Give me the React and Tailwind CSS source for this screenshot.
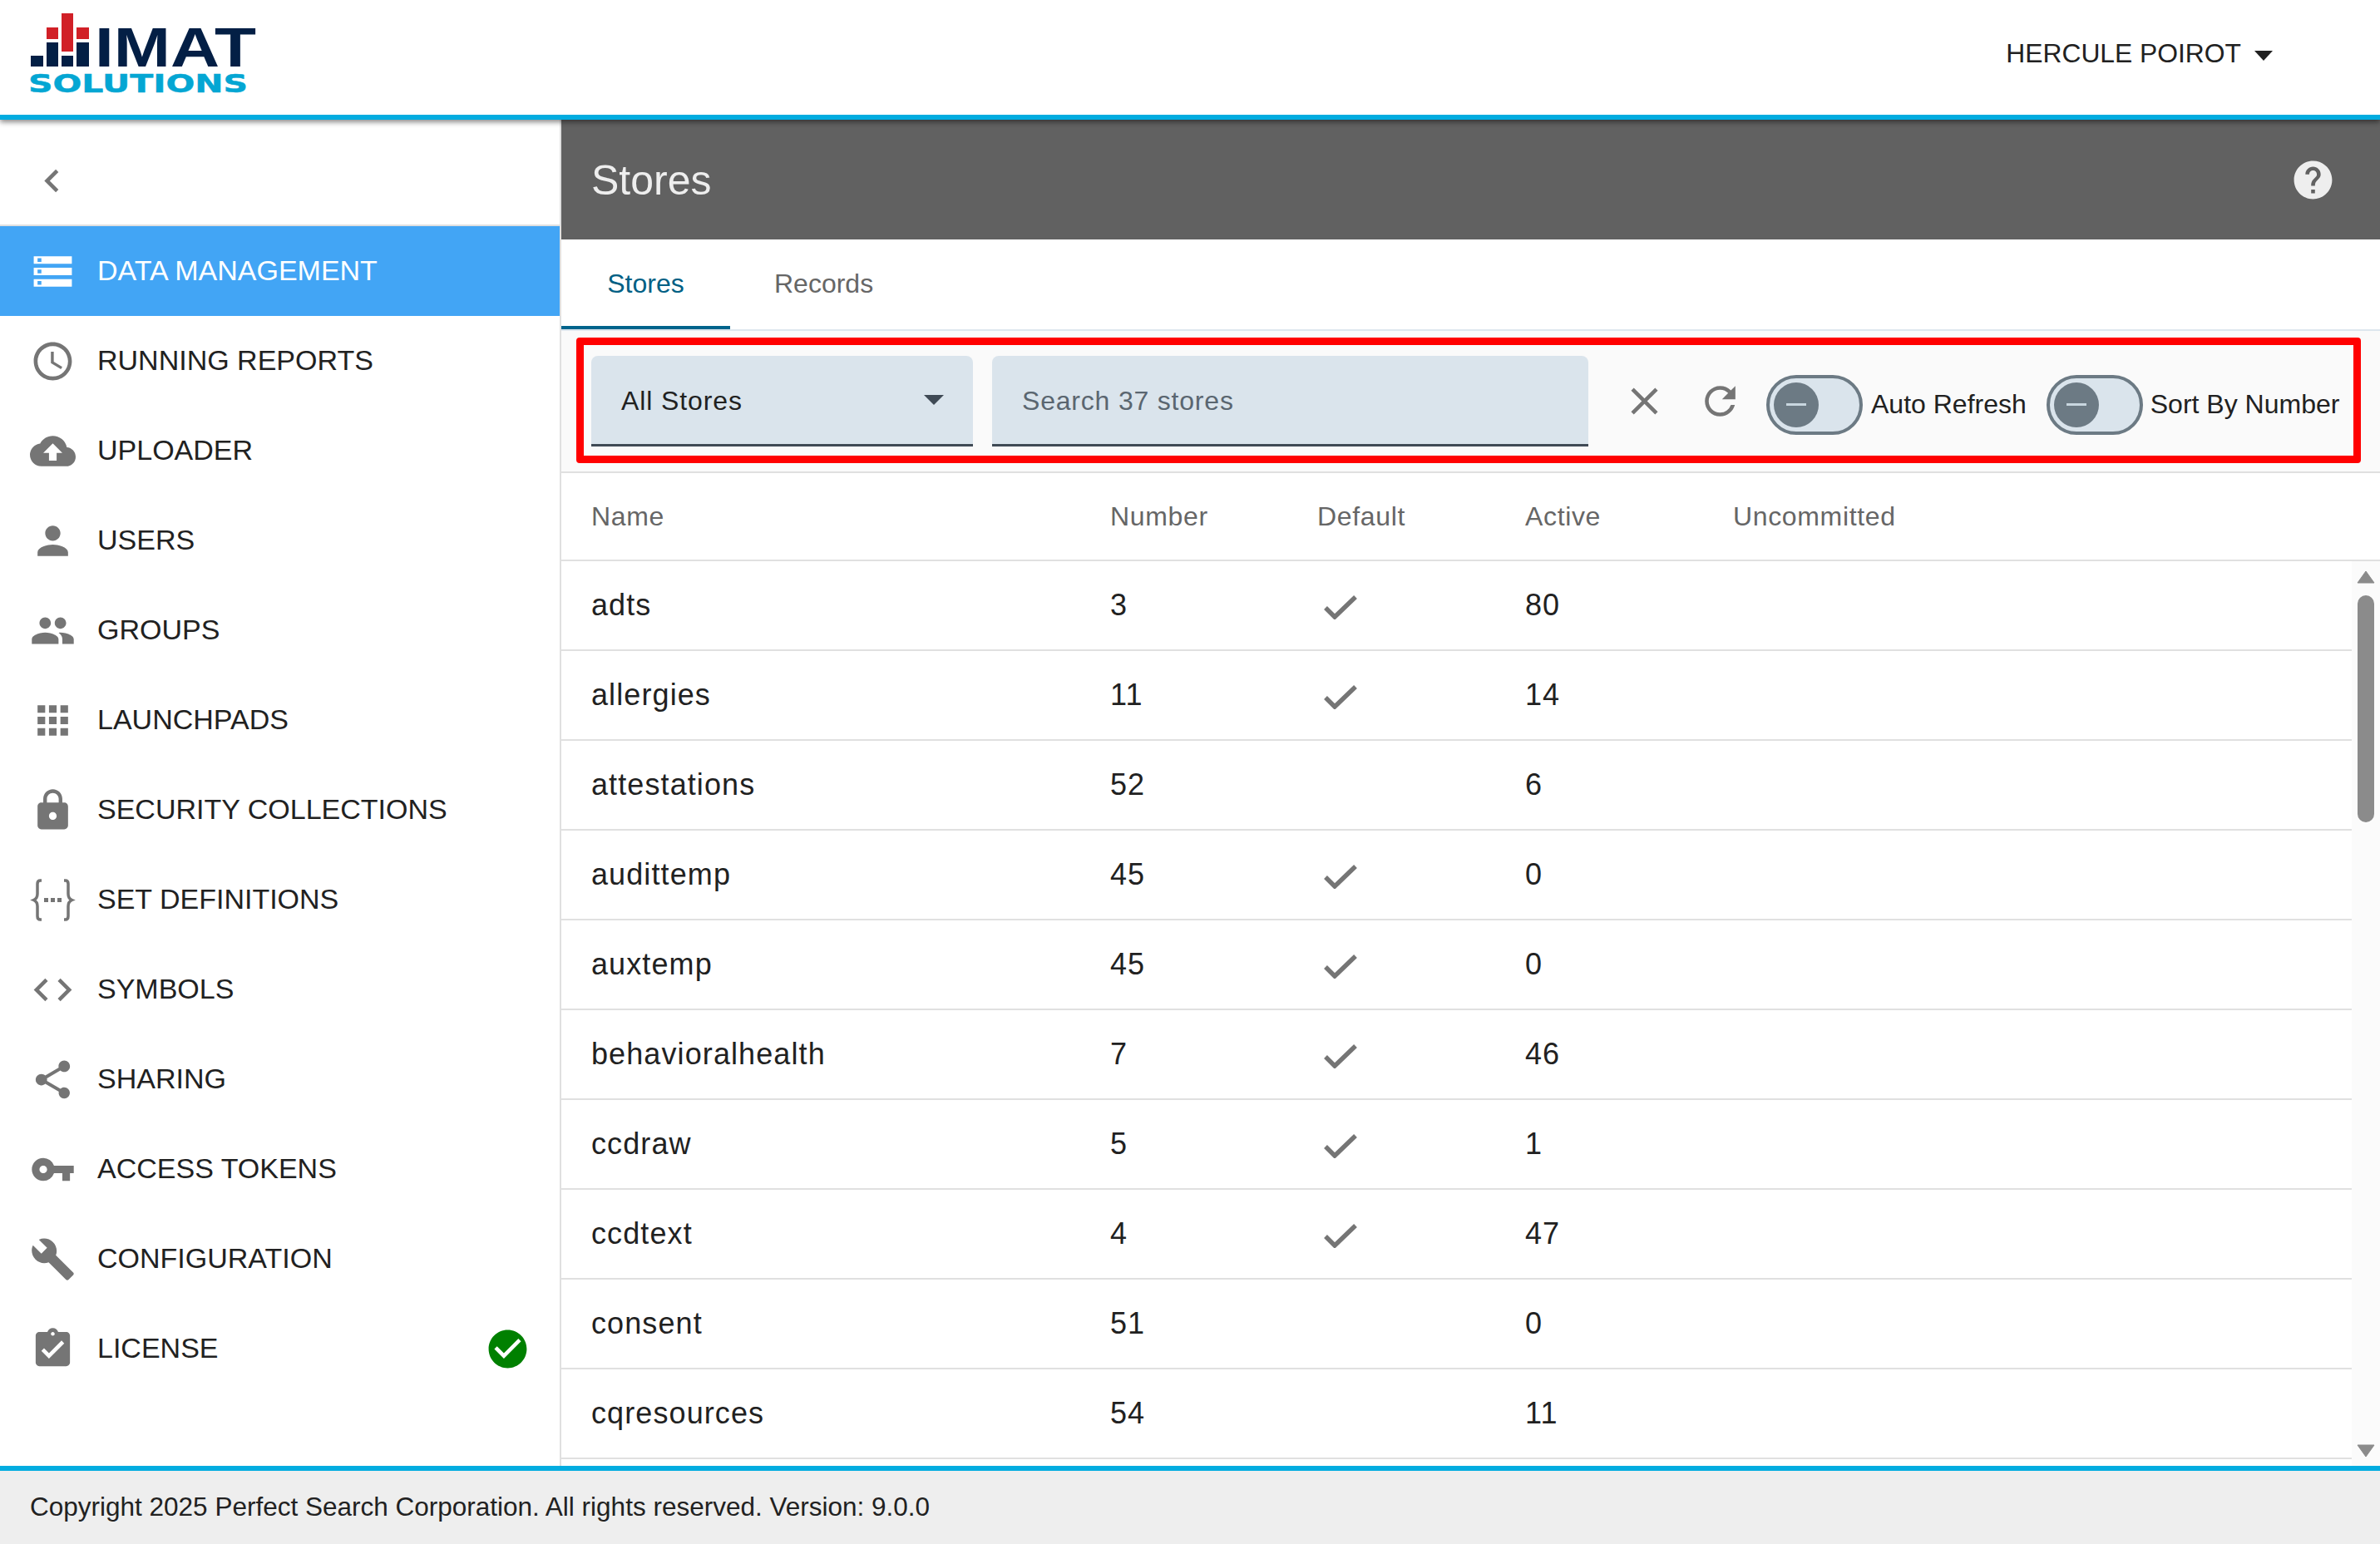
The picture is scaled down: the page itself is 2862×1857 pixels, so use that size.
import React from "react";
import {
  MdStorage,
  MdAccessTime,
  MdCloudUpload,
  MdPerson,
  MdPeople,
  MdApps,
  MdLock,
  MdCode,
  MdShare,
  MdVpnKey,
  MdBuild,
  MdAssignmentTurnedIn,
  MdCheckCircle,
  MdChevronLeft,
  MdHelp,
  MdClose,
  MdRefresh,
} from "react-icons/md";

const BracesIcon = ({ className }) => (
  <svg viewBox="0 0 55 55" className={className}>
    <path
      d="M14 4H12.5Q9 4 9 8V20Q9 25.5 4.5 27.5Q9 29.5 9 35V47Q9 51 12.5 51H14M41 4H42.5Q46 4 46 8V20Q46 25.5 50.5 27.5Q46 29.5 46 35V47Q46 51 42.5 51H41"
      fill="none"
      stroke="currentColor"
      strokeWidth="3.5"
    />
    <path d="M17 25h5v5h-5zM25 25h5v5h-5zM33 25h5v5h-5z" fill="currentColor" />
  </svg>
);

const navItems = [
  { label: "DATA MANAGEMENT", icon: MdStorage, active: true },
  { label: "RUNNING REPORTS", icon: MdAccessTime },
  { label: "UPLOADER", icon: MdCloudUpload },
  { label: "USERS", icon: MdPerson },
  { label: "GROUPS", icon: MdPeople },
  { label: "LAUNCHPADS", icon: MdApps },
  { label: "SECURITY COLLECTIONS", icon: MdLock },
  { label: "SET DEFINITIONS", icon: BracesIcon },
  { label: "SYMBOLS", icon: MdCode },
  { label: "SHARING", icon: MdShare },
  { label: "ACCESS TOKENS", icon: MdVpnKey },
  { label: "CONFIGURATION", icon: MdBuild },
  { label: "LICENSE", icon: MdAssignmentTurnedIn, badge: true },
];

const stores = [
  { name: "adts", number: 3, isDefault: true, active: 80 },
  { name: "allergies", number: 11, isDefault: true, active: 14 },
  { name: "attestations", number: 52, isDefault: false, active: 6 },
  { name: "audittemp", number: 45, isDefault: true, active: 0 },
  { name: "auxtemp", number: 45, isDefault: true, active: 0 },
  { name: "behavioralhealth", number: 7, isDefault: true, active: 46 },
  { name: "ccdraw", number: 5, isDefault: true, active: 1 },
  { name: "ccdtext", number: 4, isDefault: true, active: 47 },
  { name: "consent", number: 51, isDefault: false, active: 0 },
  { name: "cqresources", number: 54, isDefault: false, active: 11 },
];

const Logo = () => (
  <svg viewBox="0 0 340 138" className="w-[340px] h-[138px] shrink-0">
    <g fill="#d12027">
      <rect x="74" y="16" width="14" height="46" />
      <rect x="56" y="33" width="14" height="14" />
      <rect x="92" y="33" width="15" height="14" />
    </g>
    <g fill="#031f45">
      <rect x="37" y="67" width="15" height="13" />
      <rect x="56" y="51" width="14" height="29" />
      <rect x="74" y="67" width="14" height="13" />
      <rect x="92" y="51" width="15" height="29" />
    </g>
    <text
      x="114"
      y="80"
      fontFamily="Liberation Sans"
      fontWeight="700"
      fontSize="67"
      fill="#031f45"
      textLength="194"
      lengthAdjust="spacingAndGlyphs"
    >
      IMAT
    </text>
    <text
      x="34"
      y="111"
      fontFamily="DejaVu Sans"
      fontWeight="700"
      fontSize="31"
      fill="#04a6d3"
      stroke="#04a6d3"
      strokeWidth="0.5"
      textLength="264"
      lengthAdjust="spacingAndGlyphs"
    >
      SOLUTIONS
    </text>
  </svg>
);

const Toggle = ({ label, toggleClass, labelClass }) => (
  <>
    <div className={`${toggleClass} mt-[10px] w-[116px] h-[72px] shrink-0 rounded-full border-4 border-[#6c7a84] bg-[#dae4ec] flex items-center pl-[5px]`}>
      <div className="w-[54px] h-[54px] rounded-full bg-[#6c7a84] flex items-center justify-center">
        <div className="w-[24px] h-[3px] bg-[#c8d6df]" />
      </div>
    </div>
    <span className={`mt-[8px] text-[32px] text-[#212121] whitespace-nowrap ${labelClass}`}>
      {label}
    </span>
  </>
);

const rowGrid = "grid grid-cols-[624px_249px_250px_250px_1fr] pl-[36px] items-center";

const App = () => {
  return (
    <div className="h-screen flex flex-col overflow-hidden bg-white font-['Liberation_Sans',Arial,sans-serif] text-[#212121]">
      <header className="relative z-10 h-[144px] shrink-0 flex items-center justify-between border-b-[6px] border-[#02ace0] bg-white shadow-[0_3px_6px_rgba(0,0,0,0.45)]">
        <Logo />
        <div className="flex items-center gap-[16px] pr-[129px] pb-[8px]">
          <span className="text-[31.8px]">HERCULE POIROT</span>
          <svg viewBox="0 0 22 12" className="w-[22px] h-[12px] mt-[4px]">
            <path d="M0 0h22L11 12z" fill="#212121" />
          </svg>
        </div>
      </header>

      <div className="flex-1 min-h-0 flex">
        <aside className="w-[675px] shrink-0 border-r-2 border-[#e0e0e0] bg-white">
          <div className="h-[128px] border-b-2 border-[#e0e0e0] pl-[35px] pt-[46px]">
            <MdChevronLeft size={55} className="text-[#757575]" />
          </div>
          <nav>
            {navItems.map((item) => {
              const Icon = item.icon;
              return (
                <div
                  key={item.label}
                  className={
                    item.active
                      ? "h-[108px] flex items-center pl-[36px] pr-[35px] gap-[26px] bg-[#42a5f5] text-white"
                      : "h-[108px] flex items-center pl-[36px] pr-[35px] gap-[26px] text-[#212121]"
                  }
                >
                  <Icon
                    className={
                      item.active
                        ? "w-[55px] h-[55px] shrink-0 text-white"
                        : "w-[55px] h-[55px] shrink-0 text-[#757575]"
                    }
                  />
                  <span className="flex-1 pb-[2px] text-[34px] whitespace-nowrap">{item.label}</span>
                  {item.badge && (
                    <MdCheckCircle className="w-[55px] h-[55px] shrink-0 text-[#008000]" />
                  )}
                </div>
              );
            })}
          </nav>
        </aside>

        <main className="flex-1 min-w-0 flex flex-col">
          <div className="h-[144px] shrink-0 bg-[#616161] flex items-center justify-between pl-[36px] pr-[53px]">
            <h1 className="text-[50px] text-[#eeeeee] font-normal pt-[2px]">Stores</h1>
            <MdHelp size={55} className="text-[#eeeeee]" />
          </div>

          <div className="h-[110px] shrink-0 flex items-start border-b-2 border-[#dde6ee]">
            <div className="w-[203px] h-[108px] flex items-center justify-center border-b-4 border-[#00648c] pt-[2px] text-[32px] text-[#005f84]">
              Stores
            </div>
            <div className="h-[104px] flex items-center pl-[53px] pt-[2px] text-[32px] text-[#666666]">
              Records
            </div>
          </div>

          <div className="h-[171px] shrink-0 bg-[#fafafa] border-b-2 border-[#e0e0e0] pl-[18px] pt-[8px]">
            <div className="w-[2146px] h-[151px] rounded-[4px] border-[9px] border-[#ff0000] flex items-center pl-[9px]">
              <div className="mt-[2px] w-[459px] h-[109px] shrink-0 rounded-t-[8px] border-b-[3px] border-[#3f4a55] bg-[#dae4ec] flex items-center justify-between pl-[36px] pr-[35px]">
                <span className="pt-[1px] text-[32px] tracking-[0.9px] text-[#212121]">All Stores</span>
                <svg viewBox="0 0 24 12" className="w-[24px] h-[12px]">
                  <path d="M0 0h24L12 12z" fill="#3f4a55" />
                </svg>
              </div>
              <div className="mt-[2px] ml-[23px] w-[717px] h-[109px] shrink-0 rounded-t-[8px] border-b-[3px] border-[#3f4a55] bg-[#dae4ec] flex items-center pl-[36px]">
                <span className="pt-[1px] text-[32px] tracking-[0.8px] text-[#5a6670]">Search 37 stores</span>
              </div>
              <MdClose size={55} className="ml-[40px] mt-[1px] shrink-0 text-[#757575]" />
              <MdRefresh size={55} className="ml-[36px] mt-[1px] shrink-0 text-[#757575]" />
              <Toggle label="Auto Refresh" toggleClass="ml-[28px]" labelClass="ml-[10px]" />
              <Toggle label="Sort By Number" toggleClass="ml-[24px]" labelClass="ml-[9px]" />
            </div>
          </div>

          <div className={`${rowGrid} h-[106px] shrink-0 border-b-2 border-[#e0e0e0] text-[32px] tracking-[0.65px] text-[#666666] pr-[34px]`}>
            <span>Name</span>
            <span>Number</span>
            <span>Default</span>
            <span>Active</span>
            <span>Uncommitted</span>
          </div>

          <div className="flex-1 min-h-0 flex">
            <div className="flex-1 min-w-0 overflow-hidden">
              {stores.map((store) => (
                <div
                  key={store.name}
                  className={`${rowGrid} h-[108px] border-b-2 border-[#e0e0e0] text-[36px] tracking-[1.1px] text-[#212121]`}
                >
                  <span>{store.name}</span>
                  <span>{store.number}</span>
                  <span>
                    {store.isDefault && (
                      <svg viewBox="0 0 40 30" className="w-[40px] h-[30px] ml-[8px] mt-[4px]">
                        <path d="M2 16L13 27L38 3" fill="none" stroke="#757575" strokeWidth="5.5" />
                      </svg>
                    )}
                  </span>
                  <span>{store.active}</span>
                  <span />
                </div>
              ))}
            </div>
            <div className="w-[34px] shrink-0 bg-[#fbfbfb] flex flex-col items-center pt-[11px] pb-[10px]">
              <svg viewBox="0 0 22 16" className="w-[22px] h-[16px] shrink-0">
                <path d="M11 1L21 15H1z" fill="#8b8b8b" stroke="#8b8b8b" strokeLinejoin="round" />
              </svg>
              <div className="mt-[14px] w-[20px] h-[273px] rounded-full bg-[#8b8b8b]" />
              <svg viewBox="0 0 22 16" className="mt-auto w-[22px] h-[16px] shrink-0">
                <path d="M1 1H21L11 15z" fill="#8b8b8b" stroke="#8b8b8b" strokeLinejoin="round" />
              </svg>
            </div>
          </div>
        </main>
      </div>

      <footer className="h-[94px] shrink-0 border-t-[6px] border-[#02ace0] bg-[#eeeeee] flex items-center pl-[36px] pb-[1px] text-[31.5px] text-[#212121]">
        Copyright 2025 Perfect Search Corporation. All rights reserved. Version: 9.0.0
      </footer>
    </div>
  );
};

export default App;
